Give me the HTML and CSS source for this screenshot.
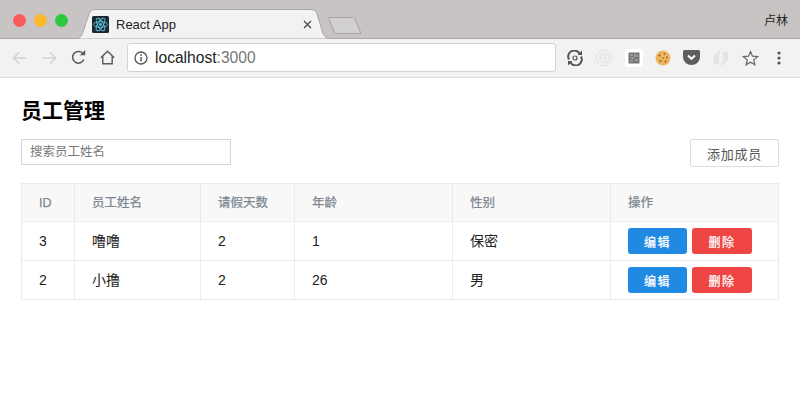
FILE: index.html
```html
<!DOCTYPE html>
<html lang="zh-CN">
<head>
<meta charset="utf-8">
<title>React App</title>
<link rel="stylesheet" href="styles.css">
</head>
<body>
<div class="tabstrip">
  <div class="lights"><span class="light red"></span><span class="light yellow"></span><span class="light green"></span></div>
  <div class="tab">
    <svg class="tab-bg" width="254" height="30" viewBox="0 0 254 30"><path d="M0 29.500C3 29.500 5 28 6.500 24.500L13 5C14 2 16 .5 19 .5H235C238 .5 240 2 241 5L247 24.500C248.500 28 251 29.500 254 29.500" fill="#f2f2f2" stroke="#aaa7a7"/></svg>
    <svg class="favicon" width="17" height="17" viewBox="0 0 17 17"><rect width="17" height="17" rx="1.500" fill="#1d2731"/><g fill="none" stroke="#5fc9e4" stroke-width=".9"><ellipse cx="8.500" cy="8.500" rx="7" ry="2.800"/><ellipse cx="8.500" cy="8.500" rx="7" ry="2.800" transform="rotate(60 8.500 8.500)"/><ellipse cx="8.500" cy="8.500" rx="7" ry="2.800" transform="rotate(120 8.500 8.500)"/></g><circle cx="8.500" cy="8.500" r="1.400" fill="#5fc9e4"/></svg>
    <span class="tab-title">React App</span>
    <svg class="tab-close" width="9" height="9" viewBox="0 0 9 9"><path d="M1 1L8 8M8 1L1 8" stroke="#444" stroke-width="1.200"/></svg>
  </div>
  <svg class="newtab" width="36" height="18" viewBox="0 0 36 18"><path d="M1.500 .5H26C27 .5 27.500 1 28 2L34 16.500H9C8 16.500 7.500 16 7 15Z" fill="#d2cfcf" stroke="#a5a2a2"/></svg>
  <span class="user">卢林</span>
</div>
<div class="toolbar">
  <svg class="tool back" width="15" height="14" viewBox="0 0 15 14"><path d="M14.500 7H1.500M7 1.500L1.500 7L7 12.500" fill="none" stroke="#d2d2d2" stroke-width="1.500"/></svg>
  <svg class="tool forward" width="15" height="14" viewBox="0 0 15 14"><path d="M.5 7H13.500M8 1.500L13.500 7L8 12.500" fill="none" stroke="#d2d2d2" stroke-width="1.500"/></svg>
  <svg class="tool reload" width="15" height="15" viewBox="0 0 15 15"><path d="M12.800 9.500A5.800 5.800 0 1 1 11.500 3.200" fill="none" stroke="#5a5a5a" stroke-width="1.500"/><path d="M8.800 5.300H14.200V0Z" fill="#5a5a5a"/></svg>
  <svg class="tool home" width="15" height="15" viewBox="0 0 15 15"><path d="M.8 7.700L7.500 1.200L14.200 7.700M2.800 6.500V13.800H12.200V6.500" fill="none" stroke="#5a5a5a" stroke-width="1.400"/></svg>
  <div class="omnibox">
    <svg class="info" width="14" height="14" viewBox="0 0 14 14"><circle cx="7" cy="7" r="6" fill="none" stroke="#555" stroke-width="1.300"/><path d="M7 6V10.500" stroke="#555" stroke-width="1.400"/><circle cx="7" cy="3.900" r=".9" fill="#555"/></svg>
    <span class="host">localhost</span><span class="port">:3000</span>
  </div>
  <div class="extensions">
    <svg width="16" height="16" viewBox="0 0 16 16"><path d="M2 9.500A6 6 0 0 1 12.500 3.500M14 6.500A6 6 0 0 1 3.500 12.500" fill="none" stroke="#555" stroke-width="2"/><path d="M10.500 5H15V.5ZM5.500 11H1V15.500Z" fill="#555"/><circle cx="8" cy="8" r="2" fill="none" stroke="#555" stroke-width="1.200"/></svg>
    <svg width="18" height="18" viewBox="0 0 18 18"><circle cx="9" cy="9" r="8" fill="#f0f0f0" stroke="#e2e2e2"/><circle cx="9.500" cy="9" r="4.500" fill="none" stroke="#e4e4e4" stroke-width="1.500"/><circle cx="9.500" cy="9" r="1.500" fill="#e4e4e4"/></svg>
    <svg width="18" height="18" viewBox="0 0 18 18"><rect width="18" height="18" fill="#fff"/><rect x="3.500" y="3.500" width="11" height="11" fill="#777"/><path d="M5 6H8M10 5V8M6 9H9M10 11H13M5 12H8M11 7H13" stroke="#bbb"/></svg>
    <svg width="16" height="16" viewBox="0 0 16 16"><circle cx="8" cy="8" r="7.500" fill="#efb55c"/><g fill="#8a5a20"><circle cx="4.500" cy="5.500" r="1"/><circle cx="9.500" cy="3.800" r=".9"/><circle cx="12" cy="7.500" r=".9"/><circle cx="10.500" cy="11.500" r="1"/><circle cx="5.500" cy="11" r="1"/><circle cx="8" cy="8" r=".8"/></g></svg>
    <svg width="17" height="15" viewBox="0 0 17 15"><path d="M0 1.500Q0 0 1.500 0H15.500Q17 0 17 1.500V7A8.500 8 0 0 1 0 7Z" fill="#5e5e5e"/><path d="M5 5.500L8.500 8.800L12 5.500" fill="none" stroke="#fff" stroke-width="2"/></svg>
    <svg width="18" height="18" viewBox="0 0 18 18"><path d="M3.500 16C-1 11 2 3 10 1C6.500 5 5.500 10 8 14ZM14.500 2C19 7 16 15 8 17C11.500 13 12.500 8 10 4Z" fill="#e4e4e4"/></svg>
    <svg width="17" height="16" viewBox="0 0 17 16"><path d="M8.500 1.500L10.500 6.200L15.600 6.600L11.700 9.900L12.900 14.800L8.500 12.200L4.100 14.800L5.300 9.900L1.400 6.600L6.500 6.200Z" fill="none" stroke="#666" stroke-width="1.200"/></svg>
    <svg class="menu" width="4" height="14" viewBox="0 0 4 14"><circle cx="2" cy="2" r="1.600" fill="#555"/><circle cx="2" cy="7" r="1.600" fill="#555"/><circle cx="2" cy="12" r="1.600" fill="#555"/></svg>
  </div>
</div>
<main class="page">
  <h1 class="title">员工管理</h1>
  <div class="controls">
    <input class="search" type="text" placeholder="搜索员工姓名">
    <button class="add" type="button">添加成员</button>
  </div>
  <table class="staff">
    <colgroup><col class="c-id"><col class="c-name"><col class="c-leave"><col class="c-age"><col class="c-sex"><col class="c-ops"></colgroup>
    <thead>
      <tr><th>ID</th><th>员工姓名</th><th>请假天数</th><th>年龄</th><th>性别</th><th>操作</th></tr>
    </thead>
    <tbody>
      <tr><td>3</td><td>噜噜</td><td>2</td><td>1</td><td>保密</td><td><div class="ops"><button class="btn edit" type="button">编辑</button><button class="btn del" type="button">删除</button></div></td></tr>
      <tr><td>2</td><td>小撸</td><td>2</td><td>26</td><td>男</td><td><div class="ops"><button class="btn edit" type="button">编辑</button><button class="btn del" type="button">删除</button></div></td></tr>
    </tbody>
  </table>
</main>
</body>
</html>
```
FILE: styles.css
```css
* { box-sizing: border-box; }
html, body { margin: 0; height: 100%; }
body {
  width: 800px;
  height: 400px;
  overflow: hidden;
  background: #fff;
  font-family: "Liberation Sans", "Noto Sans CJK SC", sans-serif;
  color: #222;
}
.tabstrip {
  display: flex;
  align-items: flex-end;
  height: 39px;
  background: #c8c4c4;
  border-bottom: 1px solid #aaa7a7;
  padding-left: 13px;
}
.lights { display: flex; gap: 8px; align-self: flex-start; margin-top: 14px; }
.light { width: 13px; height: 13px; border-radius: 50%; }
.red { background: #f85c5c; }
.yellow { background: #fbb92e; }
.green { background: #2ec840; }
.tab {
  position: relative;
  display: flex;
  align-items: center;
  width: 254px;
  height: 30px;
  margin-left: 8px;
  margin-bottom: -1px;
  padding-left: 16px;
}
.tab-bg { position: absolute; left: 0; top: 0; }
.favicon, .tab-title, .tab-close { position: relative; }
.tab-title { margin-left: 7px; font-size: 13px; color: #222; }
.tab-close { margin-left: 127px; }
.newtab { margin-left: -3px; margin-bottom: 3px; }
.user { margin-left: auto; margin-right: 12px; align-self: center; font-size: 12px; color: #222; }
.toolbar {
  display: flex;
  align-items: center;
  height: 39px;
  background: #f2f2f2;
  border-bottom: 1px solid #dcdcdc;
  padding: 0 0 1px 12px;
}
.tool { flex: none; }
.forward { margin-left: 15px; }
.reload { margin-left: 14px; }
.home { margin-left: 14px; }
.omnibox {
  display: flex;
  align-items: center;
  width: 429px;
  height: 29px;
  margin-left: 12px;
  background: #fff;
  border: 1px solid #d4d4d4;
  border-radius: 3px;
  padding-left: 6px;
  font-size: 15.6px;
}
.info { margin-right: 7px; }
.host { color: #222; }
.port { color: #777; }
.extensions { display: flex; align-items: center; gap: 12px; margin-left: 11px; }
.menu { margin-left: 6px; }
.page { padding: 21px; }
.title {
  margin: 0;
  font-size: 21px;
  line-height: 24px;
  font-weight: 700;
  color: #000;
}
.controls {
  display: flex;
  justify-content: space-between;
  align-items: flex-start;
  margin-top: 16px;
}
.search {
  width: 210px;
  height: 26px;
  border: 1px solid #d6d6d6;
  padding: 0 8px;
  font: 12.5px "Liberation Sans", "Noto Sans CJK SC", sans-serif;
  outline: none;
}
.search::placeholder { color: #777; opacity: 1; }
.add {
  width: 89px;
  height: 28px;
  background: #fff;
  border: 1px solid #dcdcdc;
  border-radius: 2px;
  font: 13px "Liberation Sans", "Noto Sans CJK SC", sans-serif;
  letter-spacing: .8px;
  color: #555;
  padding: 0;
}
.staff {
  width: 757px;
  margin-top: 16px;
  table-layout: fixed;
  border-collapse: collapse;
  font-size: 13px;
}
.c-id { width: 53px; }
.c-name { width: 126px; }
.c-leave { width: 94px; }
.c-age { width: 158px; }
.c-sex { width: 158px; }
.c-ops { width: 168px; }
.staff th, .staff td {
  border: 1px solid #ebebeb;
  padding: 0 17px;
  text-align: left;
  line-height: 20px;
}
.staff th {
  height: 38px;
  background: #f8f8f8;
  color: #7d8790;
  font-weight: 400;
  font-size: 12.5px;
  -webkit-text-stroke: .25px #7d8790;
}
.staff td { height: 39px; color: #222; font-size: 14px; }
.ops { display: flex; gap: 5px; }
.btn {
  height: 26px;
  border: 0;
  border-radius: 3px;
  color: #fff;
  font: 12px "Liberation Sans", "Noto Sans CJK SC", sans-serif;
  -webkit-text-stroke: .25px #fff;
  letter-spacing: 1.500px;
  padding: 0;
}
.edit { width: 59px; background: #208ae3; }
.del { width: 60px; background: #ef4444; }
```
